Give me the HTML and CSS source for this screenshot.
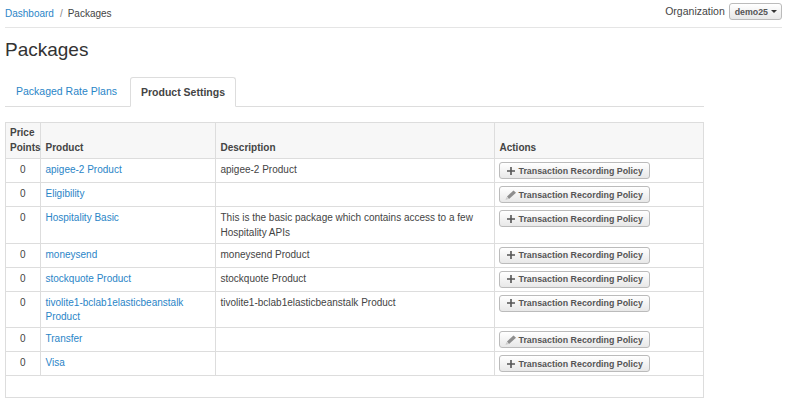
FILE: index.html
```html
<!DOCTYPE html>
<html>
<head>
  <meta charset="utf-8">
  <title>Packages</title>
  <link rel="stylesheet" href="styles.css">
</head>
<body>
  <div class="topbar">
    <ul class="breadcrumb">
      <li><a href="#">Dashboard</a></li>
      <li class="sep">/</li>
      <li>Packages</li>
    </ul>
    <div class="org">
      <span>Organization</span>
      <button class="org-btn">demo25<span class="caret"></span></button>
    </div>
  </div>

  <h1 class="title">Packages</h1>

  <ul class="tabs">
    <li><a href="#">Packaged Rate Plans</a></li>
    <li class="active"><a href="#">Product Settings</a></li>
  </ul>

  <div class="table-box">
    <table class="products">
      <thead>
        <tr>
          <th class="col-points">Price Points</th>
          <th class="col-product">Product</th>
          <th class="col-desc">Description</th>
          <th>Actions</th>
        </tr>
      </thead>
      <tbody>
        <tr>
          <td class="num">0</td>
          <td><a href="#">apigee-2 Product</a></td>
          <td>apigee-2 Product</td>
          <td><button class="btn"><svg class="ico" viewBox="0 0 12 12"><path d="M5.2 2h1.6v3.2H10v1.6H6.8V10H5.2V6.8H2V5.2h3.2z"/></svg>Transaction Recording Policy</button></td>
        </tr>
        <tr>
          <td class="num">0</td>
          <td><a href="#">Eligibility</a></td>
          <td></td>
          <td><button class="btn"><svg class="ico" viewBox="0 0 12 12"><path class="tip" d="M0.5 11l1-3 2 2z"/><path class="body" d="M2 7.5L8.5 1.5l2.5 2.2L4 10z"/></svg>Transaction Recording Policy</button></td>
        </tr>
        <tr>
          <td class="num">0</td>
          <td><a href="#">Hospitality Basic</a></td>
          <td>This is the basic package which contains access to a few Hospitality APIs</td>
          <td><button class="btn"><svg class="ico" viewBox="0 0 12 12"><path d="M5.2 2h1.6v3.2H10v1.6H6.8V10H5.2V6.8H2V5.2h3.2z"/></svg>Transaction Recording Policy</button></td>
        </tr>
        <tr>
          <td class="num">0</td>
          <td><a href="#">moneysend</a></td>
          <td>moneysend Product</td>
          <td><button class="btn"><svg class="ico" viewBox="0 0 12 12"><path d="M5.2 2h1.6v3.2H10v1.6H6.8V10H5.2V6.8H2V5.2h3.2z"/></svg>Transaction Recording Policy</button></td>
        </tr>
        <tr>
          <td class="num">0</td>
          <td><a href="#">stockquote Product</a></td>
          <td>stockquote Product</td>
          <td><button class="btn"><svg class="ico" viewBox="0 0 12 12"><path d="M5.2 2h1.6v3.2H10v1.6H6.8V10H5.2V6.8H2V5.2h3.2z"/></svg>Transaction Recording Policy</button></td>
        </tr>
        <tr>
          <td class="num">0</td>
          <td><a href="#">tivolite1-bclab1elasticbeanstalk Product</a></td>
          <td>tivolite1-bclab1elasticbeanstalk Product</td>
          <td><button class="btn"><svg class="ico" viewBox="0 0 12 12"><path d="M5.2 2h1.6v3.2H10v1.6H6.8V10H5.2V6.8H2V5.2h3.2z"/></svg>Transaction Recording Policy</button></td>
        </tr>
        <tr>
          <td class="num">0</td>
          <td><a href="#">Transfer</a></td>
          <td></td>
          <td><button class="btn"><svg class="ico" viewBox="0 0 12 12"><path class="tip" d="M0.5 11l1-3 2 2z"/><path class="body" d="M2 7.5L8.5 1.5l2.5 2.2L4 10z"/></svg>Transaction Recording Policy</button></td>
        </tr>
        <tr>
          <td class="num">0</td>
          <td><a href="#">Visa</a></td>
          <td></td>
          <td><button class="btn"><svg class="ico" viewBox="0 0 12 12"><path d="M5.2 2h1.6v3.2H10v1.6H6.8V10H5.2V6.8H2V5.2h3.2z"/></svg>Transaction Recording Policy</button></td>
        </tr>
      </tbody>
    </table>
  </div>
</body>
</html>
```

FILE: styles.css
```css
* {
  box-sizing: border-box;
}

body {
  margin: 0;
  padding: 0 5px;
  background-color: #fff;
  font-family: "Liberation Sans", Arial, sans-serif;
  font-size: 10px;
  line-height: 14.75px;
  color: #444;
  overflow: hidden;
}

a {
  color: #2a85c7;
  text-decoration: none;
}

.topbar {
  display: flex;
  justify-content: space-between;
  height: 28px;
  margin-right: 2px;
  border-bottom: 1px solid #e5e5e5;
}

.breadcrumb {
  display: flex;
  list-style: none;
  margin: 0;
  padding: 7px 0 0;
}
.breadcrumb .sep {
  margin: 0 5px 0 6px;
  color: #888;
}

.org {
  display: flex;
  align-items: flex-start;
  gap: 4px;
  padding-top: 3px;
  font-size: 10.5px;
}
.org > span {
  padding-top: 1px;
}
.org-btn {
  display: flex;
  align-items: center;
  height: 17px;
  padding: 0 4px 0 5px;
  border: 1px solid #bbb;
  border-radius: 3px;
  background: linear-gradient(#fff, #e8e8e8);
  font-family: inherit;
  font-size: 8.8px;
  font-weight: bold;
  color: #555;
}
.caret {
  margin-left: 3px;
  border-top: 3px solid #333;
  border-left: 3px solid transparent;
  border-right: 3px solid transparent;
}

.title {
  margin: 8px 0 0;
  font-size: 19px;
  font-weight: normal;
  line-height: 28px;
  color: #333;
}

.tabs {
  display: flex;
  list-style: none;
  width: 699px;
  height: 30px;
  margin: 13px 0 15px;
  padding: 0;
  border-bottom: 1px solid #ddd;
  font-size: 10.5px;
}
.tabs a {
  display: block;
  height: 30px;
  padding: 7px 10px 0;
}
.tabs li:first-child a {
  padding: 7px 13px 0 11px;
}
.tabs .active a {
  border: 1px solid #ddd;
  border-bottom-color: #fff;
  border-radius: 3px 3px 0 0;
  background-color: #fff;
  font-weight: bold;
  color: #444;
}

.table-box {
  width: 699px;
  height: 276px;
  border: 1px solid #ddd;
}

.products {
  width: 100%;
  table-layout: fixed;
  border-collapse: collapse;
}
.products th, .products td {
  padding: 4px 4px 2px 5px;
  border-bottom: 1px solid #ddd;
  border-left: 1px solid #ddd;
  text-align: left;
  vertical-align: top;
}
.products th:first-child, .products td:first-child {
  padding-left: 4px;
  border-left: 0;
}
.products td:last-child {
  padding: 3px 4px;
}
.products th {
  padding-top: 3px;
  padding-bottom: 3px;
  vertical-align: bottom;
  background-color: #f7f7f7;
  font-weight: bold;
  line-height: 14.5px;
  color: #444;
}
.col-points {
  width: 34px;
}
.col-product {
  width: 175px;
}
.col-desc {
  width: 279px;
}
.num {
  text-align: center !important;
}

.btn {
  display: flex;
  align-items: center;
  width: 151px;
  height: 17px;
  padding: 0 0 0 5px;
  border: 1px solid #bbb;
  border-radius: 3px;
  background: linear-gradient(#fff, #e8e8e8);
  font-family: inherit;
  font-size: 8.85px;
  font-weight: bold;
  color: #555;
}
.ico {
  width: 12px;
  height: 12px;
  margin-right: 2px;
  flex: none;
  fill: #555;
}
.ico .body {
  fill: #8e8e8e;
}
.ico .tip {
  fill: #ccc;
}
```
